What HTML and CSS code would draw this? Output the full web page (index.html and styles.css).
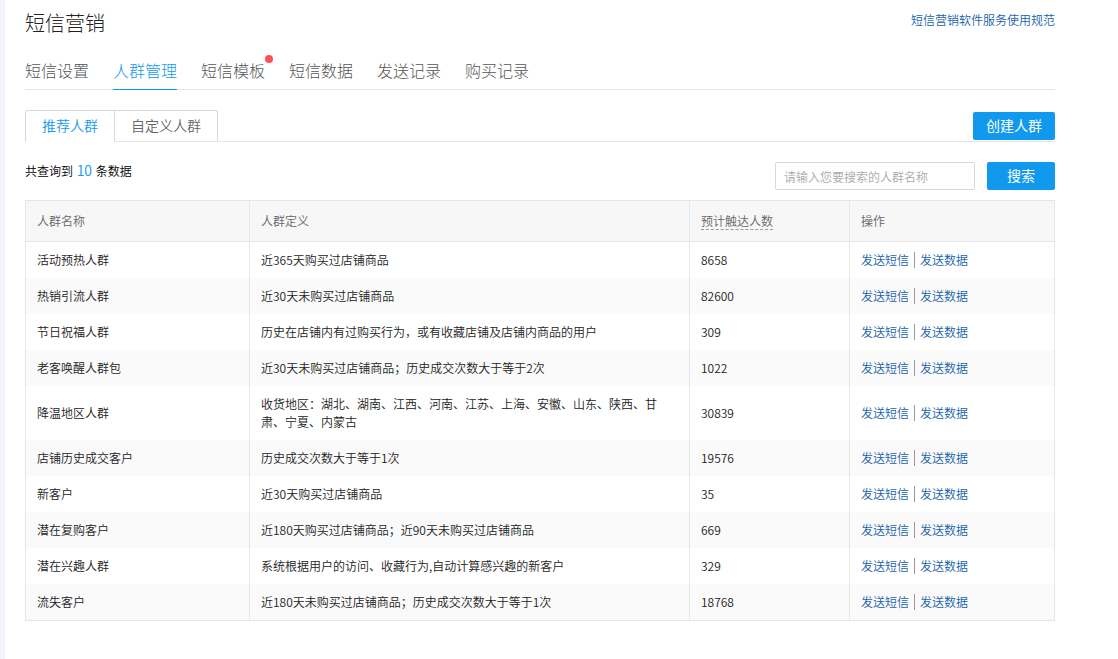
FILE: index.html
```html
<!DOCTYPE html>
<html lang="zh-CN">
<head>
    <meta charset="UTF-8">
    <meta name="viewport" content="width=device-width, initial-scale=1.0">
    <title>短信营销</title>
    <link rel="stylesheet" href="styles.css">
</head>
<body>
    <div class="page">
        <header class="header">
            <h1>短信营销</h1>
            <a href="#">短信营销软件服务使用规范</a>
        </header>

        <nav class="nav">
            <a href="#">短信设置</a>
            <a href="#" class="active">人群管理</a>
            <a href="#">短信模板<span class="dot"></span></a>
            <a href="#">短信数据</a>
            <a href="#">发送记录</a>
            <a href="#">购买记录</a>
        </nav>

        <div class="tabs">
            <button type="button" class="tab active">推荐人群</button>
            <button type="button" class="tab">自定义人群</button>
            <button type="button" class="btn btn-create">创建人群</button>
        </div>

        <div class="toolbar">
            <p class="count">共查询到 <span>10</span> 条数据</p>
            <form class="search">
                <input type="text" aria-label="人群名称" placeholder="请输入您要搜索的人群名称">
                <button type="button" class="btn btn-search">搜索</button>
            </form>
        </div>

        <table class="crowd-table">
            <thead>
                <tr>
                    <th class="col-name">人群名称</th>
                    <th class="col-define">人群定义</th>
                    <th class="col-number"><span class="tip">预计触达人数</span></th>
                    <th>操作</th>
                </tr>
            </thead>
            <tbody>
                <tr>
                    <td>活动预热人群</td>
                    <td>近365天购买过店铺商品</td>
                    <td>8658</td>
                    <td><div class="actions"><a href="#">发送短信</a><a href="#">发送数据</a></div></td>
                </tr>
                <tr>
                    <td>热销引流人群</td>
                    <td>近30天未购买过店铺商品</td>
                    <td>82600</td>
                    <td><div class="actions"><a href="#">发送短信</a><a href="#">发送数据</a></div></td>
                </tr>
                <tr>
                    <td>节日祝福人群</td>
                    <td>历史在店铺内有过购买行为，或有收藏店铺及店铺内商品的用户</td>
                    <td>309</td>
                    <td><div class="actions"><a href="#">发送短信</a><a href="#">发送数据</a></div></td>
                </tr>
                <tr>
                    <td>老客唤醒人群包</td>
                    <td>近30天未购买过店铺商品；历史成交次数大于等于2次</td>
                    <td>1022</td>
                    <td><div class="actions"><a href="#">发送短信</a><a href="#">发送数据</a></div></td>
                </tr>
                <tr>
                    <td>降温地区人群</td>
                    <td>收货地区：湖北、湖南、江西、河南、江苏、上海、安徽、山东、陕西、甘肃、宁夏、内蒙古</td>
                    <td>30839</td>
                    <td><div class="actions"><a href="#">发送短信</a><a href="#">发送数据</a></div></td>
                </tr>
                <tr>
                    <td>店铺历史成交客户</td>
                    <td>历史成交次数大于等于1次</td>
                    <td>19576</td>
                    <td><div class="actions"><a href="#">发送短信</a><a href="#">发送数据</a></div></td>
                </tr>
                <tr>
                    <td>新客户</td>
                    <td>近30天购买过店铺商品</td>
                    <td>35</td>
                    <td><div class="actions"><a href="#">发送短信</a><a href="#">发送数据</a></div></td>
                </tr>
                <tr>
                    <td>潜在复购客户</td>
                    <td>近180天购买过店铺商品；近90天未购买过店铺商品</td>
                    <td>669</td>
                    <td><div class="actions"><a href="#">发送短信</a><a href="#">发送数据</a></div></td>
                </tr>
                <tr>
                    <td>潜在兴趣人群</td>
                    <td>系统根据用户的访问、收藏行为,自动计算感兴趣的新客户</td>
                    <td>329</td>
                    <td><div class="actions"><a href="#">发送短信</a><a href="#">发送数据</a></div></td>
                </tr>
                <tr>
                    <td>流失客户</td>
                    <td>近180天未购买过店铺商品；历史成交次数大于等于1次</td>
                    <td>18768</td>
                    <td><div class="actions"><a href="#">发送短信</a><a href="#">发送数据</a></div></td>
                </tr>
            </tbody>
        </table>
    </div>
</body>
</html>
```
FILE: styles.css
```css
* {
    box-sizing: border-box;
}

body {
    margin: 0;
    font-family: "Noto Sans CJK SC", sans-serif;
    font-size: 12px;
    font-weight: 350;
    line-height: 18px;
    color: #222;
    background: #fff;
}

a {
    color: #1862ab;
    text-decoration: none;
}

button, input {
    font-family: inherit;
    font-weight: inherit;
}

.page {
    min-height: 100vh;
    padding: 8px 63px 24px 20px;
    border-left: 5px solid #f3f5fa;
}

.header {
    display: flex;
    justify-content: space-between;
    align-items: flex-start;
}

.header h1 {
    margin: 0;
    font-size: 20px;
    font-weight: 300;
    line-height: 30px;
}

.header a {
    padding-top: 3px;
}

/* main navigation */
.nav {
    display: flex;
    gap: 24px;
    margin-top: 16px;
    border-bottom: 1px solid #e6e6e6;
}

.nav a {
    position: relative;
    margin-bottom: -1px;
    padding-bottom: 3px;
    font-size: 16px;
    font-weight: 300;
    line-height: 32px;
    color: #555;
    border-bottom: 1px solid transparent;
}

.nav a.active {
    color: #1199ee;
    border-bottom-color: #1199ee;
}

.dot {
    position: absolute;
    top: 1px;
    right: -8px;
    width: 8px;
    height: 8px;
    border-radius: 50%;
    background: #ff5050;
}

/* crowd type tabs */
.tabs {
    display: flex;
    align-items: flex-start;
    margin-top: 20px;
    border-bottom: 1px solid #e6e6e6;
}

.tab {
    height: 31px;
    padding: 0 16px 2px;
    font-size: 14px;
    line-height: 28px;
    color: #666;
    background: #fff;
    border: 1px solid #d9d9d9;
    border-bottom: none;
    border-radius: 3px 3px 0 0;
    cursor: pointer;
}

.tab + .tab {
    margin-left: -1px;
    border-top-left-radius: 0;
}

.tab.active {
    height: 32px;
    margin-bottom: -1px;
    padding-bottom: 3px;
    color: #1199ee;
    border-top-right-radius: 0;
}

.btn {
    height: 28px;
    padding: 0 0 2px;
    font-size: 14px;
    font-weight: 400;
    line-height: 26px;
    color: #fff;
    background: #1199ee;
    border: none;
    border-radius: 2px;
    cursor: pointer;
}

.btn-create {
    width: 82px;
    margin: 2px 0 0 auto;
}

.btn-search {
    width: 68px;
}

/* result count and search */
.toolbar {
    display: flex;
    justify-content: space-between;
    align-items: flex-start;
    margin: 20px 0 10px;
}

.count {
    margin: 0;
    line-height: 16px;
    color: #000;
}

.count span {
    margin: 0 1px;
    font-size: 14px;
    color: #1199ee;
}

.search {
    display: flex;
    gap: 12px;
}

.search input {
    width: 200px;
    height: 28px;
    padding: 0 8px;
    font-size: 12px;
    color: #333;
    border: 1px solid #d9d9d9;
    border-radius: 2px;
}

.search input::placeholder {
    color: #aaa;
}

/* table */
.crowd-table {
    width: 100%;
    table-layout: fixed;
    border-collapse: collapse;
    border: 1px solid #e6e6e6;
}

.crowd-table th, .crowd-table td {
    padding: 9px 11px;
    text-align: left;
    border-left: 1px solid #e6e6e6;
}

.crowd-table th {
    height: 41px;
    font-weight: inherit;
    color: #666;
    background: #f7f7f7;
    border-bottom: 1px solid #e6e6e6;
}

.crowd-table tbody tr:nth-child(even) {
    background: #fafafa;
}

.col-name {
    width: 224px;
}

.col-define {
    width: 440px;
}

.col-number {
    width: 160px;
}

.tip {
    display: inline-block;
    line-height: 16px;
    border-bottom: 1px dashed #999;
}

.actions {
    display: flex;
    align-items: center;
}

.actions a + a {
    margin-left: 5px;
    padding-left: 5px;
    line-height: 16px;
    border-left: 1px solid #999;
}
```
